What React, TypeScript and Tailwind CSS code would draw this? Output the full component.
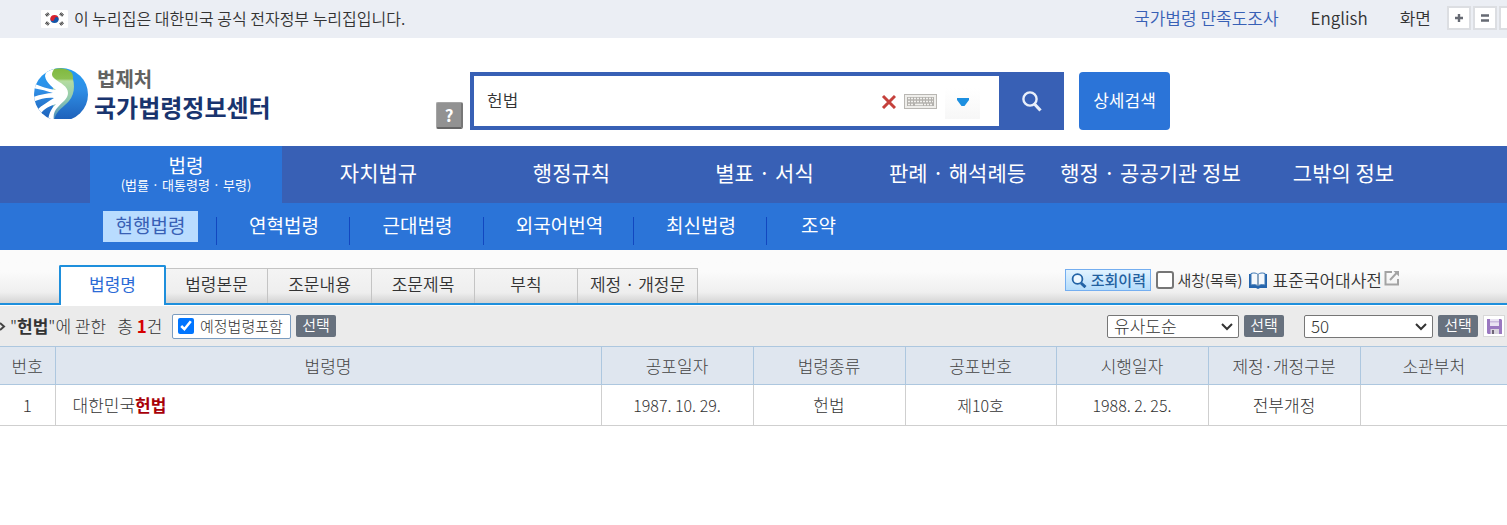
import { useState } from "react";

const MENU = ["자치법규", "행정규칙", "별표 · 서식", "판례 · 해석례등", "행정 · 공공기관 정보", "그밖의 정보"];

const SUB_MENU = [
  { label: "연혁법령", width: "w-[133px]" },
  { label: "근대법령", width: "w-[134px]" },
  { label: "외국어번역", width: "w-[150px]" },
  { label: "최신법령", width: "w-[133px]" },
  { label: "조약", width: "w-[102px]" },
];

const TABS = [
  { label: "법령본문", width: "w-[102px]" },
  { label: "조문내용", width: "w-[104px]" },
  { label: "조문제목", width: "w-[103px]" },
  { label: "부칙", width: "w-[103px]" },
  { label: "제정 · 개정문", width: "w-[120px]" },
];

const COLUMNS = [
  { label: "번호", width: "w-[55px]" },
  { label: "법령명", width: "" },
  { label: "공포일자", width: "w-[152px]" },
  { label: "법령종류", width: "w-[152px]" },
  { label: "공포번호", width: "w-[151px]" },
  { label: "시행일자", width: "w-[152px]" },
  { label: "제정·개정구분", width: "w-[152px]" },
  { label: "소관부처", width: "w-[147px]" },
];

function Flag() {
  return (
    <svg width="27" height="18" viewBox="0 0 27 18" aria-hidden="true">
      <rect width="27" height="18" rx="1" fill="#fff" />
      <path d="M9.4 9a4.1 4.1 0 0 1 8.2 0z" fill="#d8232f" />
      <path d="M9.4 9a4.1 4.1 0 0 0 8.2 0z" fill="#1456a8" />
      <circle cx="11.4" cy="9" r="2" fill="#d8232f" />
      <circle cx="15.6" cy="9" r="2" fill="#1456a8" />
      <g stroke="#333" strokeWidth="3" strokeDasharray="1 0.4">
        <path d="M5 5.6 7.8 3.4M19.2 3.4 22 5.6M5 12.4l2.8 2.2M19.2 14.6l2.8-2.2" />
      </g>
    </svg>
  );
}

function Logo() {
  return (
    <a href="#" className="flex w-[238px] shrink-0 items-start gap-[6px]">
      <svg width="54" height="51" viewBox="0 0 54 51" className="shrink-0" aria-hidden="true">
        <defs>
          <linearGradient id="globe" x1="0" y1="0" x2="0" y2="1">
            <stop offset="0" stopColor="#219cf3" />
            <stop offset="0.4" stopColor="#2f8fe6" />
            <stop offset="1" stopColor="#1d5fb8" />
          </linearGradient>
          <linearGradient id="leaf" x1="0" y1="0" x2="0" y2="1">
            <stop offset="0" stopColor="#80b93f" />
            <stop offset="0.2" stopColor="#8cc152" />
            <stop offset="0.24" stopColor="#b5dca0" />
            <stop offset="0.6" stopColor="#8fc9b0" />
            <stop offset="1" stopColor="#3f86c4" />
          </linearGradient>
          <clipPath id="round">
            <ellipse cx="27" cy="26.5" rx="27" ry="26.5" />
          </clipPath>
        </defs>
        <g clipPath="url(#round)">
          <rect width="54" height="53" fill="url(#globe)" />
          <path d="M17 2C24-1 33 0 37 4c2 2 2 4 2 7 2 8 1 16-4 22C29 40 22 42 20 53h-3l3-22z" fill="url(#leaf)" />
          <path
            d="M12 4 21 0C17 5 17 8 21 11c5 4 13 7 13 14 0 6-6 9-10 14-4 4-5 8-4 14h-6c1-8 3-12 8-17C15 38 10 41 7 45l-4-3c5-5 11-8 17-12C13 29 6 31-1 34v-5c6-2 14-4 20-4C13 23 6 21-1 20v-5c6 3 15 6 23 7C17 18 12 14 11 8z"
            fill="#fff"
          />
        </g>
      </svg>
      <span className="flex flex-col font-bold">
        <span className="pl-[3px] text-[20px] leading-[22px] text-[#626262]">법제처</span>
        <span className="mt-[2px] text-[24px] leading-[30px] whitespace-nowrap text-[#19346e]">국가법령정보센터</span>
      </span>
    </a>
  );
}

function TopBar() {
  return (
    <div className="flex h-[38px] items-center overflow-hidden bg-[#ebeef4] pl-[41px] text-[17px] font-[350] text-[#333]">
      <Flag />
      <p className="ml-[6px] pb-[2px] text-[16px] whitespace-nowrap">이 누리집은 대한민국 공식 전자정부 누리집입니다.</p>
      <div className="-mr-4 ml-auto flex shrink-0 items-center pb-[2px]">
        <a href="#" className="mr-8 text-[#3860b5]">국가법령 만족도조사</a>
        <a href="#" className="mr-8">English</a>
        <span className="mr-4">화면</span>
        <div className="flex gap-[2px]">
          <button type="button" aria-label="확대" className="flex size-6 items-center justify-center border-2 border-[#dcdee2] bg-white">
            <svg width="8" height="8" viewBox="0 0 8 8"><path d="M4 0v8M0 4h8" stroke="#666a73" strokeWidth="2.4" /></svg>
          </button>
          <button type="button" aria-label="기본" className="flex size-6 items-center justify-center border-2 border-[#dcdee2] bg-white">
            <svg width="8" height="8" viewBox="0 0 8 8"><path d="M0 1.5h8M0 6.5h8" stroke="#666a73" strokeWidth="2.4" /></svg>
          </button>
          <button type="button" aria-label="축소" className="flex size-6 items-center justify-center border-2 border-[#dcdee2] bg-white" />
        </div>
      </div>
    </div>
  );
}

function SearchBar() {
  const [query, setQuery] = useState("헌법");
  return (
    <form className="ml-[164px] flex items-start" onSubmit={(e) => e.preventDefault()}>
      <button
        type="button"
        className="mt-[30px] mr-[7px] size-[27px] shrink-0 rounded-[2px] border border-r-2 border-b-2 border-[#a5a5a5] border-r-[#777] border-b-[#666] bg-[#929292] text-[17px] leading-[22px] font-bold text-white"
      >
        ?
      </button>
      <div className="flex h-[58px] border-4 border-[#3860b5] bg-white">
        <input
          aria-label="검색어"
          value={query}
          onChange={(e) => setQuery(e.target.value)}
          className="w-[407px] pb-[2px] pl-[13px] text-[17px] font-[350] text-[#333] outline-none"
        />
        <div className="flex w-[118px] items-center">
          <button type="button" aria-label="지우기">
            <svg width="15" height="15" viewBox="0 0 15 15"><path d="M2 2l12 12M14 2 2 14" stroke="#c5413c" strokeWidth="3" /></svg>
          </button>
          <button type="button" aria-label="가상 키보드" className="ml-2">
            <svg width="33" height="15" viewBox="0 0 33 15">
              <rect x=".5" y=".5" width="32" height="14" fill="#efeeeb" stroke="#b9b7b3" />
              <rect x="3" y="3" width="27" height="9" fill="#b3b1ad" />
              <path d="M4 4.5h25M4 7.5h25M4 10.5h6M20 10.5h9" stroke="#f2f1ee" strokeDasharray="2 1" strokeWidth="1.6" />
              <path d="M11 10.5h8" stroke="#f2f1ee" strokeWidth="1.6" />
            </svg>
          </button>
          <button
            type="button"
            aria-label="자동완성"
            className="mt-[5px] ml-2 flex h-[31px] w-[35px] items-center justify-center bg-linear-to-b from-white to-[#f7f7f7]"
          >
            <svg width="12" height="8" viewBox="0 0 12 8" className="mb-1"><path d="M0 0h12v2L7.5 8h-3L0 2z" fill="#1c8fe0" /></svg>
          </button>
        </div>
        <button type="submit" aria-label="검색" className="flex w-[61px] items-center justify-center bg-[#3860b5]">
          <svg width="20" height="21" viewBox="0 0 20 21" fill="none" stroke="#e9effa" className="ml-1">
            <circle cx="8" cy="8" r="6.6" strokeWidth="2.4" />
            <path d="m12.5 13 6 6.5" strokeWidth="3.2" />
          </svg>
        </button>
      </div>
      <button type="button" className="ml-[15px] h-[58px] w-[91px] rounded-[4px] bg-[#2b74d8] pb-[2px] text-[17px] text-white">
        상세검색
      </button>
    </form>
  );
}

function Navigation() {
  return (
    <nav className="whitespace-nowrap text-white">
      <div className="flex h-[57px] bg-[#3860b5] pl-[90px]">
        <a href="#" className="flex w-48 shrink-0 flex-col items-center justify-center bg-[#2b74d8] pb-px">
          <span className="text-[19px] leading-[22px]">법령</span>
          <span className="text-[13px] leading-[18px]">(법률 · 대통령령 · 부령)</span>
        </a>
        {MENU.map((item) => (
          <a key={item} href="#" className="flex w-[193px] shrink-0 items-center justify-center pb-1 text-[21px]">
            {item}
          </a>
        ))}
      </div>
      <div className="flex h-[47px] items-start bg-[#2b74d8] pt-2 pl-[103px] text-[19px] leading-[28px]">
        <a href="#" className="mr-[18px] w-[95px] bg-[#b9dcff] pb-[3px] text-center text-[#3860b5]">현행법령</a>
        {SUB_MENU.map((item) => (
          <span key={item.label} className={`flex items-start ${item.width}`}>
            <span className="mt-[6px] h-7 w-px bg-[#1247c0]" />
            <a href="#" className="grow pl-[2px] text-center">{item.label}</a>
          </span>
        ))}
      </div>
    </nav>
  );
}

function TabStrip() {
  return (
    <div className="flex h-[55px] items-end border-b-2 border-[#1e8fdc] bg-linear-to-b from-[#fbfbfb] from-40% via-[#efefef] via-80% to-[#d4d4d4] pl-[59px] text-[17px] whitespace-nowrap text-[#333]">
      <button type="button" className="-mb-[2px] h-10 w-[107px] rounded-t-[2px] border-2 border-b-0 border-[#1e8fdc] bg-white pb-1 text-[#2b6bd6]">
        법령명
      </button>
      {TABS.map((tab) => (
        <button
          key={tab.label}
          type="button"
          className={`h-[35px] border-t border-r border-[#c4c4c4] bg-linear-to-b from-[#f4f4f4] via-[#eeeeee] via-70% to-[#d2d2d2] pb-[5px] font-[350] ${tab.width}`}
        >
          {tab.label}
        </button>
      ))}
      <div className="mr-[107px] mb-[10px] ml-auto flex h-[26px] items-center font-[350]">
        <button
          type="button"
          className="flex h-[22px] w-[86px] items-center justify-center gap-1 border border-[#74aef0] bg-linear-to-b from-[#e2f3ff] to-[#b4dcfb] text-[15px] leading-5 font-medium text-[#22609f]"
        >
          <svg width="16" height="15" viewBox="0 0 16 15" fill="none" stroke="#2263a6">
            <circle cx="6.5" cy="6" r="4.9" fill="#eef8ff" strokeWidth="1.8" />
            <path d="m10 10 4.5 4.2" strokeWidth="3" />
          </svg>
          조회이력
        </button>
        <label className="ml-[5px] flex items-center gap-[3px] text-[15px]">
          <input type="checkbox" className="size-[18px] appearance-none rounded-[3px] border-2 border-[#767676] bg-white checked:bg-[#0075ff]" />
          새창(목록)
        </label>
        <a href="#" className="ml-[6px] flex items-center">
          <svg width="18" height="17" viewBox="0 0 18 17" className="mr-[6px]">
            <path d="M0 2h2v11h5l2 1 2-1h5V2h2v14h-7l-2 1-2-1H0z" fill="#2565ad" />
            <path d="M2 1.5c3-1 5.500-.5 7 1 1.500-1.500 4-2 7-1V13c-3-.8-5.500-.4-7 1-1.500-1.400-4-1.800-7-1z" fill="#f4f8fc" stroke="#3f78b5" />
            <path d="M9 2.500V14" stroke="#6f8fb0" strokeWidth="1.600" />
          </svg>
          표준국어대사전
          <svg width="16" height="16" viewBox="0 0 16 16" fill="none" stroke="#a3a3a3" strokeWidth="2" className="mb-1 ml-[2px]">
            <path d="M8 2H1.500v12.500H14V9M6 10l7.500-8" />
            <path d="M9.500 1H15v5.500z" fill="#a3a3a3" stroke="none" />
          </svg>
        </a>
      </div>
    </div>
  );
}

function SelectButton() {
  return (
    <button type="button" className="h-[22px] w-10 shrink-0 rounded-[2px] bg-[#67717e] pb-[2px] text-[15px] leading-5 font-[350] text-white">
      선택
    </button>
  );
}

function SelectBox({ label, options, width }: { label: string; options: string[]; width: string }) {
  return (
    <div className={`relative ${width}`}>
      <select
        aria-label={label}
        className="block h-[23px] w-full appearance-none rounded-[2px] border border-[#767676] bg-white pb-[2px] pl-[6px] text-[17px] leading-[19px] font-light text-[#333]"
      >
        {options.map((option) => (
          <option key={option}>{option}</option>
        ))}
      </select>
      <svg width="12" height="8" viewBox="0 0 12 8" className="pointer-events-none absolute top-2 right-[6px]">
        <path d="m1 1 5 5 5-5" fill="none" stroke="#333" strokeWidth="2" />
      </svg>
    </div>
  );
}

function ResultBar() {
  const [upcoming, setUpcoming] = useState(true);
  return (
    <div className="flex h-[41px] items-center border-t border-white bg-[#ebebeb] text-[17px] whitespace-nowrap text-[#333]">
      <svg width="6" height="9" viewBox="0 0 6 9" className="mr-1 shrink-0">
        <path d="m0 1 4 3.500-4 3.500" fill="none" stroke="#444" strokeWidth="2" />
      </svg>
      <p className="w-[162px] font-light">
        "<strong className="font-bold">헌법</strong>"에 관한&nbsp;&nbsp; 총 <strong className="font-bold text-[#d60000]">1</strong>건
      </p>
      <label className="flex h-[25px] w-[119px] shrink-0 items-center gap-[6px] rounded-[2px] border border-[#7a9cc0] bg-white pl-[5px] text-[15px] font-light">
        <input
          type="checkbox"
          checked={upcoming}
          onChange={(e) => setUpcoming(e.target.checked)}
          className="size-4 accent-[#0075ff]"
        />
        예정법령포함
      </label>
      <div className="ml-[5px] flex">
        <SelectButton />
      </div>
      <div className="mr-px ml-auto flex shrink-0 items-center gap-[5px]">
        <SelectBox label="정렬" options={["유사도순", "법령명순", "공포일자순"]} width="w-[132px]" />
        <SelectButton />
        <span className="w-[10px]" />
        <SelectBox label="목록 개수" options={["50", "100", "150"]} width="w-[129px]" />
        <SelectButton />
        <button type="button" aria-label="저장" className="mr-px flex size-[22px] items-center justify-center border border-[#d8d8d8] bg-white">
          <svg width="15" height="15" viewBox="0 0 15 15">
            <path d="M0 0h14l1 1v14H1l-1-1z" fill="#9a78c0" />
            <path d="M3 0h9v7H3z" fill="#e9e3f2" />
            <path d="M3 2h9v1.500H3z" fill="#c9b9dd" />
            <path d="M3.500 10H12v5H3.500z" fill="#d9d5de" />
            <path d="M5 11h2v4H5z" fill="#6f6678" />
          </svg>
        </button>
      </div>
    </div>
  );
}

function ResultTable() {
  return (
    <table className="w-full table-fixed border-collapse text-center text-[17px] font-light text-[#333]">
      <thead>
        <tr className="h-[38px] border-y border-[#adc7df] bg-[#dfe6ef] text-[#444]">
          {COLUMNS.map((col) => (
            <th key={col.label} scope="col" className={`border-r border-[#adc7df] font-light last:border-r-0 ${col.width}`}>
              {col.label}
            </th>
          ))}
        </tr>
      </thead>
      <tbody>
        <tr className="h-[41px] border-b border-[#cfcfcf] *:border-r *:border-[#cfcfcf] *:last:border-r-0">
          <td>1</td>
          <td className="pl-[17px] text-left">
            <a href="#">
              대한민국<strong className="font-bold text-[#a80008]">헌법</strong>
            </a>
          </td>
          <td className="text-[16px]">1987. 10. 29.</td>
          <td>헌법</td>
          <td className="text-[16px]">제10호</td>
          <td className="text-[16px]">1988. 2. 25.</td>
          <td>전부개정</td>
          <td />
        </tr>
      </tbody>
    </table>
  );
}

export default function App() {
  return (
    <div className="min-h-screen overflow-x-hidden bg-white font-['Noto_Sans_CJK_KR',sans-serif]">
      <TopBar />
      <header className="flex h-[108px] items-start pl-[34px]">
        <div className="pt-[30px]">
          <Logo />
        </div>
        <div className="pt-[34px]">
          <SearchBar />
        </div>
      </header>
      <Navigation />
      <TabStrip />
      <ResultBar />
      <ResultTable />
    </div>
  );
}
